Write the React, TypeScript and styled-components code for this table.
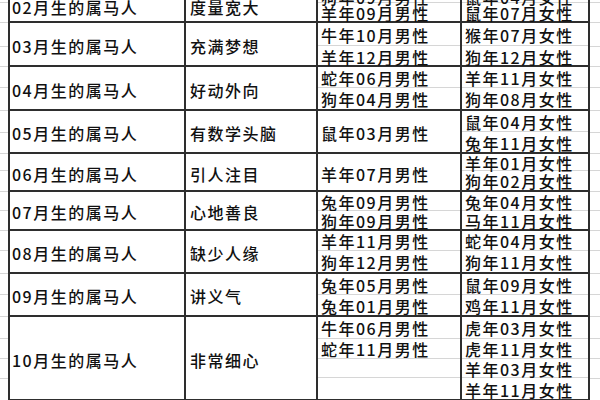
import React from 'react';
import styled, { createGlobalStyle } from 'styled-components';

const Colors = {
  ink: '#111111',
  rule: '#2e2e2e',
  grid: '#d6d6d6',
  paper: '#ffffff',
};

const GlobalStyle = createGlobalStyle`
  html, body {
    margin: 0;
    padding: 0;
    background: ${Colors.paper};
    overflow: hidden;
  }
  body {
    font-family: "Noto Sans CJK SC", "Noto Sans", sans-serif;
  }
`;

type Group = {
  month: string;
  trait: string;
  male: string[];
  female: string[];
  rows: number[];
};

const groups: Group[] = [
  { month: '02', trait: '度量宽大', male: ['狗年09月男性', '羊年09月男性'], female: ['鼠年04月女性', '鼠年07月女性'], rows: [14, 20] },
  { month: '03', trait: '充满梦想', male: ['牛年10月男性', '羊年12月男性'], female: ['猴年07月女性', '狗年12月女性'], rows: [24, 20] },
  { month: '04', trait: '好动外向', male: ['蛇年06月男性', '狗年04月男性'], female: ['羊年11月女性', '狗年08月女性'], rows: [21, 23] },
  { month: '05', trait: '有数学头脑', male: ['鼠年03月男性'], female: ['鼠年04月女性', '兔年11月女性'], rows: [22, 21] },
  { month: '06', trait: '引人注目', male: ['羊年07月男性'], female: ['羊年01月女性', '狗年02月女性'], rows: [17, 21] },
  { month: '07', trait: '心地善良', male: ['兔年09月男性', '狗年09月男性'], female: ['兔年04月女性', '马年11月女性'], rows: [19, 20] },
  { month: '08', trait: '缺少人缘', male: ['羊年11月男性', '狗年12月男性'], female: ['蛇年04月女性', '狗年11月女性'], rows: [20, 23] },
  { month: '09', trait: '讲义气', male: ['兔年05月男性', '兔年01月男性'], female: ['鼠年09月女性', '鸡年11月女性'], rows: [21, 22] },
  { month: '10', trait: '非常细心', male: ['牛年06月男性', '蛇年11月男性', '', ''], female: ['虎年03月女性', '虎年11月女性', '羊年03月女性', '羊年11月女性'], rows: [22, 20, 20, 22] },
];

const Sheet = styled.div`
  display: flex;
  flex-direction: column;
  margin-top: -11px;
  width: 600px;
`;

const GroupRow = styled.div<{ $height: number }>`
  display: grid;
  grid-template-columns: 8px 176px 132px 144px 130px 1fr;
  height: ${(p) => p.$height}px;
`;

const Strip = styled.div`
  display: flex;
  flex-direction: column;
`;

const StripCell = styled.div<{ $h: number }>`
  flex: ${(p) => p.$h} 1 0;
  border-bottom: 1px solid ${Colors.grid};
`;

const Text = styled.span`
  font-size: 16px;
  font-weight: 500;
  line-height: 1;
  letter-spacing: 1.5px;
  color: ${Colors.ink};
  white-space: nowrap;
`;

const MergedCell = styled.div<{ $last?: boolean; $inset?: number }>`
  box-sizing: border-box;
  display: flex;
  align-items: center;
  padding: 3px 0 0 ${(p) => p.$inset ?? 2}px;
  border-left: 2px solid ${Colors.rule};
  border-bottom: 2px solid ${Colors.rule};
  ${(p) => (p.$last ? `border-right: 2px solid ${Colors.rule};` : '')}
`;

const Column = styled.div<{ $last?: boolean }>`
  box-sizing: border-box;
  display: flex;
  flex-direction: column;
  border-left: 2px solid ${Colors.rule};
  border-bottom: 2px solid ${Colors.rule};
  ${(p) => (p.$last ? `border-right: 2px solid ${Colors.rule};` : '')}
`;

const SubCell = styled.div<{ $h: number }>`
  flex: ${(p) => p.$h} 1 0;
  min-height: 0;
  display: flex;
  align-items: center;
  padding: 2px 0 0 3px;
  border-bottom: 1px solid ${Colors.grid};
  &:last-child {
    border-bottom: none;
  }
`;

const Pairs = ({ items, rows, last }: { items: string[]; rows: number[]; last?: boolean }) => {
  if (items.length === 1) {
    return (
      <MergedCell $last={last} $inset={3}>
        <Text>{items[0]}</Text>
      </MergedCell>
    );
  }
  return (
    <Column $last={last}>
      {items.map((t, i) => (
        <SubCell key={i} $h={rows[i]}>
          <Text>{t}</Text>
        </SubCell>
      ))}
    </Column>
  );
};

export default function App() {
  return (
    <>
      <GlobalStyle />
      <Sheet>
        {groups.map((g) => (
          <GroupRow key={g.month} $height={g.rows.reduce((a, b) => a + b, 0)}>
            <Strip>
              {g.rows.map((h, i) => (
                <StripCell key={i} $h={h} />
              ))}
            </Strip>
            <MergedCell>
              <Text>{g.month}月生的属马人</Text>
            </MergedCell>
            <MergedCell $inset={4}>
              <Text>{g.trait}</Text>
            </MergedCell>
            <Pairs items={g.male} rows={g.rows} />
            <Pairs items={g.female} rows={g.rows} last />
            <Strip>
              {g.rows.map((h, i) => (
                <StripCell key={i} $h={h} />
              ))}
            </Strip>
          </GroupRow>
        ))}
      </Sheet>
    </>
  );
}
